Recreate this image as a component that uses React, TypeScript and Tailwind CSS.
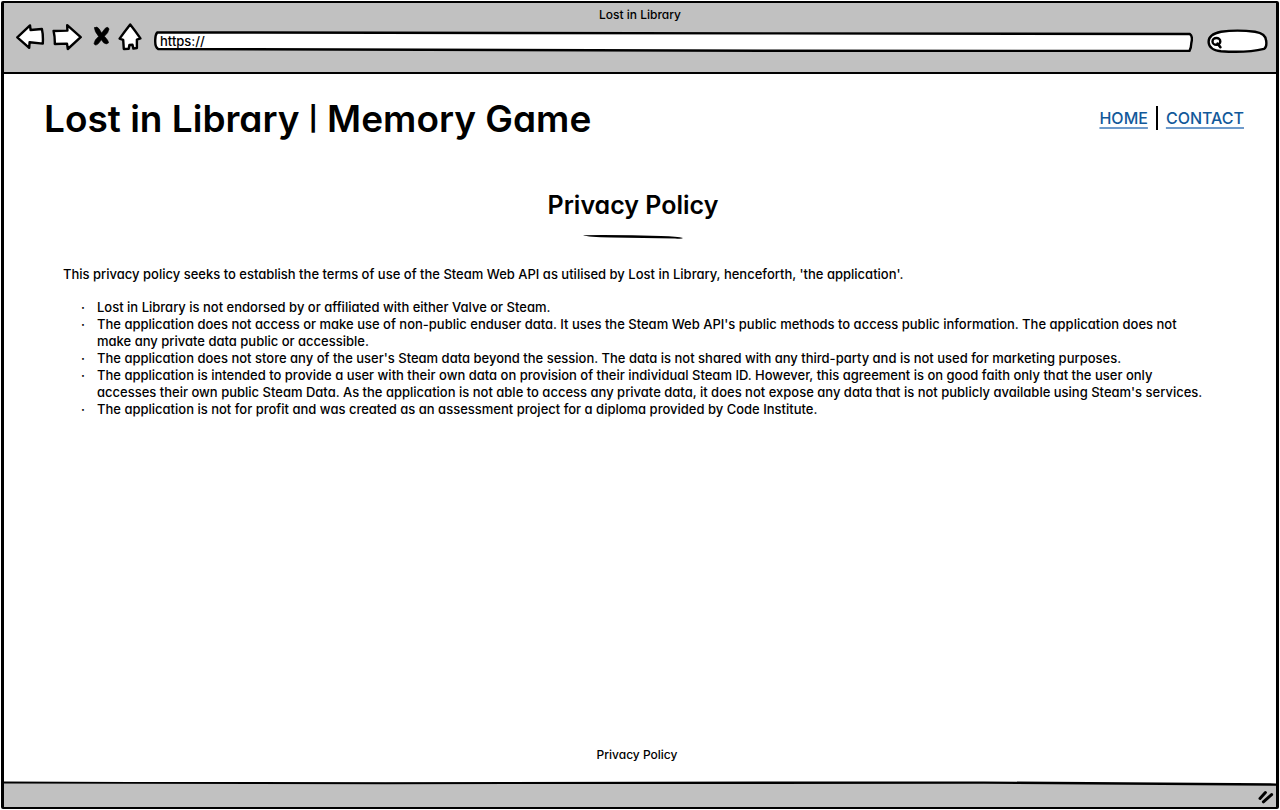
import type { ReactNode } from "react";

const rules: string[][] = [
  ["Lost in Library is not endorsed by or affiliated with either Valve or Steam."],
  [
    "The application does not access or make use of non-public enduser data. It uses the Steam Web API's public methods to access public information. The application does not",
    "make any private data public or accessible.",
  ],
  [
    "The application does not store any of the user's Steam data beyond the session. The data is not shared with any third-party and is not used for marketing purposes.",
  ],
  [
    "The application is intended to provide a user with their own data on provision of their individual Steam ID. However, this agreement is on good faith only that the user only",
    "accesses their own public Steam Data. As the application is not able to access any private data, it does not expose any data that is not publicly available using Steam's services.",
  ],
  ["The application is not for profit and was created as an assessment project for a diploma provided by Code Institute."],
];

function ToolButton({ label, width, children }: { label: string; width: number; children: ReactNode }) {
  return (
    <button type="button" aria-label={label} className="shrink-0">
      <svg
        width={width}
        height="30"
        viewBox={`0 0 ${width} 30`}
        fill="white"
        stroke="black"
        strokeWidth="2.4"
        strokeLinejoin="round"
        strokeLinecap="round"
      >
        {children}
      </svg>
    </button>
  );
}

function Toolbar() {
  return (
    <header className="bg-[#c1c1c1] h-[69px]">
      <p className="h-[22px] pt-[3px] text-center text-[12px] leading-[18px]">Lost in Library</p>
      <div className="flex items-start pl-3 pr-2">
        <div className="flex items-start -mt-[3px]">
          <ToolButton label="Back" width={30}>
            <path d="M1.3 15.3 L14 3.4 L14.6 8 L25.9 7 Q27.3 13 26.8 21.6 L13.6 20.2 L13.2 25.8 Z" />
          </ToolButton>
          <span className="w-[6px]" />
          <ToolButton label="Forward" width={30}>
            <path d="M1.6 9 L15.4 8.6 L15.2 3.2 L28.7 15.2 L15.8 27 L15 21.6 L2.8 22 Q3 15 1.6 9 Z" />
          </ToolButton>
          <span className="w-[11px]" />
          <ToolButton label="Stop" width={18}>
            <path
              d="M1.5 5.8 Q4 3.6 6.2 7 L8.6 11 L12.3 6.2 Q15 4 16.1 7 Q15.6 10.6 11.4 14.3 Q15.5 18.6 15.6 20.8 Q13.4 23 10.6 20.8 L8.4 17.8 L5.4 21.6 Q2.2 24.6 1 21.4 Q1.6 17.6 5.6 14.4 Q1.2 9 1.5 5.8 Z"
              fill="black"
              strokeWidth="0.6"
            />
          </ToolButton>
          <span className="w-[7px]" />
          <ToolButton label="Home" width={24}>
            <path d="M12.2 2.4 Q17 8.4 22.4 16.4 L18.9 17.6 L18.9 26 L15.4 26.6 L14.5 22.8 L11.4 23 L10.7 26.8 L5.8 27 L5.2 17.8 L1.6 16.6 Q7 9 12.2 2.4 Z" />
          </ToolButton>
        </div>
        <label className="relative ml-3 mt-[5px] flex h-[22px] min-w-0 flex-1 items-center">
          <svg
            className="absolute inset-0 size-full"
            viewBox="0 0 1000 22"
            preserveAspectRatio="none"
            fill="white"
            stroke="black"
            strokeWidth="2.4"
            strokeLinejoin="round"
            aria-hidden="true"
          >
            <path
              vectorEffect="non-scaling-stroke"
              d="M3 2.4 Q300 2.6 600 3.4 L997 4 Q1000 6 998.4 13 Q998.2 18 996.6 21 L600 20.8 L4 19 Q1 17 1.2 11 Q1 5 3 2.4 Z"
            />
          </svg>
          <input
            aria-label="Address"
            defaultValue="https://"
            className="relative w-full bg-transparent pl-[6px] text-[13px] leading-4 outline-none"
          />
        </label>
        <label className="relative ml-[14px] mt-1 flex h-6 w-[61px] shrink-0 items-center">
          <svg
            className="absolute inset-0 size-full"
            viewBox="0 0 61 24"
            fill="white"
            stroke="black"
            strokeWidth="2.4"
            strokeLinecap="round"
            aria-hidden="true"
          >
            <path d="M14 2.8 Q30 .4 48 2.8 Q59 4.6 59.2 12 Q60 18.4 57 19.8 Q40 24 14 22.2 Q2 21 1.6 13 Q1.6 5.2 14 2.8 Z" />
            <ellipse cx="9.4" cy="12.4" rx="3.9" ry="3.4" />
            <path d="M10.6 14.6 L13.4 18.2" strokeWidth="2.6" />
          </svg>
          <input aria-label="Search" className="relative ml-4 w-10 bg-transparent text-[12px] outline-none" />
        </label>
      </div>
    </header>
  );
}

export default function App() {
  return (
    <div className="min-h-screen bg-white p-px font-['Inter',sans-serif] font-medium text-black [font-feature-settings:'cv11']">
      <div className="flex min-h-[calc(100vh-2px)] flex-col rounded-[2px] border-[3px] border-t-2 border-b-2 border-black">
        <Toolbar />
        <div className="h-[2px] bg-black" />
        <main className="flex flex-1 flex-col">
          <div className="flex items-start justify-between pl-10 pr-8">
            <h1 className="mt-[21px] text-[37px] leading-[48px] font-semibold">
              Lost in Library <span className="align-[5px] text-[24px] leading-none font-bold">|</span> Memory Game
            </h1>
            <nav className="mt-8 flex items-center gap-2 text-[16px] leading-6 text-[#12599a]">
              <a href="#home" className="underline decoration-[#6f9bcb] decoration-2 underline-offset-[3px]">HOME</a>
              <span className="h-6 w-[2px] bg-black" />
              <a href="#contact" className="underline decoration-[#6f9bcb] decoration-2 underline-offset-[3px]">CONTACT</a>
            </nav>
          </div>
          <h2 className="mt-11 pr-[14px] text-center text-[25px] leading-9 font-semibold">Privacy Policy</h2>
          <svg className="mx-auto mt-[11px] -translate-x-[7px]" width="100" height="6" viewBox="0 0 100 6" aria-hidden="true">
            <path d="M0 1.2 Q40 .8 78 2 Q95 2.4 100 4 Q99 5 92 4.4 Q60 4 28 3.4 Q5 3 0 1.2 Z" />
          </svg>
          <p className="mt-[26px] px-[59px] text-[13px] leading-[17px]">
            This privacy policy seeks to establish the terms of use of the Steam Web API as utilised by Lost in Library, henceforth, 'the application'.
          </p>
          <ul className="mt-4 pl-[77px] pr-16 text-[13px] leading-[17px]">
            {rules.map((lines) => (
              <li key={lines[0]} className="flex">
                <span className="w-4 shrink-0" aria-hidden="true">·</span>
                <span>
                  {lines.map((line) => (
                    <span key={line} className="block">{line}</span>
                  ))}
                </span>
              </li>
            ))}
          </ul>
          <footer className="mt-auto pb-[17px] pr-[6px] text-center text-[12px] leading-[18px]">
            <a href="#privacy">Privacy Policy</a>
          </footer>
        </main>
        <svg className="block h-[5px] w-full bg-[#c1c1c1]" viewBox="0 0 1000 5" preserveAspectRatio="none" aria-hidden="true">
          <path d="M0 0 H1000 V3 L780 1 L0 1 Z" fill="white" />
          <path d="M0 .4 Q150 1.2 300 1.2 L600 .4 L770 .4 L1000 2.4 V4.8 L770 2.8 L300 3.2 L0 2.6 Z" />
        </svg>
        <div className="flex h-[21px] items-center justify-end bg-[#c1c1c1]">
          <svg width="20" height="16" viewBox="0 0 20 16" stroke="black" strokeWidth="3" strokeLinecap="round" aria-hidden="true">
            <path d="M4 9.4 L9.4 3.6 M7.4 12.8 L15.6 5.6" />
          </svg>
        </div>
      </div>
    </div>
  );
}
